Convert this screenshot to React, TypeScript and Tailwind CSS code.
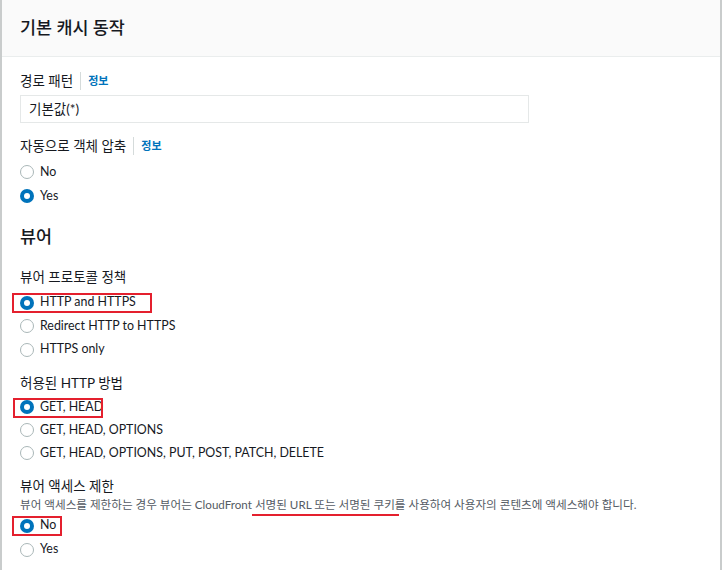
import React from "react";

const font = { fontFamily: '"Lato", "Noto Sans CJK KR", sans-serif' };

function Radio({ checked }: { checked?: boolean }) {
  return checked ? (
    <span className="inline-flex h-[14px] w-[14px] shrink-0 items-center justify-center rounded-full bg-[#0073bb]">
      <span className="h-[6px] w-[6px] rounded-full bg-white" />
    </span>
  ) : (
    <span className="h-[14px] w-[14px] shrink-0 rounded-full border-[1.5px] border-[#aab7b8] bg-white" />
  );
}

function Option({
  label,
  checked,
  box,
}: {
  label: string;
  checked?: boolean;
  box?: string;
}) {
  return (
    <div className="relative flex h-[23.5px] items-center gap-[6px] text-[12.4px] text-[#16191f]">
      <Radio checked={checked} />
      <span>{label}</span>
      {box && (
        <span
          className={`pointer-events-none absolute top-[2px] h-[20px] border-2 border-[#e4202e] ${box}`}
        />
      )}
    </div>
  );
}

function Label({ text, info }: { text: string; info?: boolean }) {
  return (
    <div className="flex h-5 items-center text-[13.5px] text-[#16191f]">
      <span>{text}</span>
      {info && (
        <>
          <span className="mx-[7px] h-[18px] w-px bg-[#d5dbdb]" />
          <span className="text-[11px] font-bold text-[#0073bb]">정보</span>
        </>
      )}
    </div>
  );
}

export default function App() {
  return (
    <div
      style={font}
      className="h-[570px] w-[722px] overflow-hidden border-r-2 border-l-2 border-[#c9cccc] bg-white"
    >
      <div className="flex h-[57px] items-center border-b border-[#eaeded] bg-[#fafafa] px-[18px]">
        <h2 className="text-[17.4px] font-medium text-[#16191f]">기본 캐시 동작</h2>
      </div>

      <div className="px-[18px] pt-[14px]">
        <Label text="경로 패턴" info />
        <div className="mt-[4px] flex h-[28px] w-[509px] items-center border border-[#e5e8e8] px-[8px] text-[13.5px] text-[#16191f]">
          기본값(*)
        </div>

        <div className="mt-[13px]">
          <Label text="자동으로 객체 압축" info />
          <div className="mt-[4px] [&>div]:h-[24px]">
            <Option label="No" />
            <Option label="Yes" checked />
          </div>
        </div>

        <h3 className="mt-[17px] text-[17.4px] font-medium leading-6 text-[#16191f]">뷰어</h3>

        <div className="mt-[18px]">
          <Label text="뷰어 프로토콜 정책" />
          <div className="mt-[4px]">
            <Option label="HTTP and HTTPS" checked box="left-[-8px] w-[140px]" />
            <Option label="Redirect HTTP to HTTPS" />
            <Option label="HTTPS only" />
          </div>
        </div>

        <div className="mt-[12px]">
          <Label text="허용된 HTTP 방법" />
          <div className="mt-[2px] [&>div]:h-[23px]">
            <Option label="GET, HEAD" checked box="left-[-7px] w-[90px]" />
            <Option label="GET, HEAD, OPTIONS" />
            <Option label="GET, HEAD, OPTIONS, PUT, POST, PATCH, DELETE" />
          </div>
        </div>

        <div className="mt-[12px]">
          <Label text="뷰어 액세스 제한" />
          <p className="mt-[1px] text-[11.6px] leading-[14px] text-[#545b64]">
            뷰어 액세스를 제한하는 경우 뷰어는 CloudFront{" "}
            <span className="relative">
              서명된 URL 또는 서명된 쿠키
              <span className="absolute right-[-4px] bottom-[-5px] left-[-3px] h-[2px] bg-[#e4202e]" />
            </span>
            를 사용하여 사용자의 콘텐츠에 액세스해야 합니다.
          </p>
          <div className="mt-[2px] [&>div]:h-[24px]">
            <Option label="No" checked box="left-[-8px] w-[50px]" />
            <Option label="Yes" />
          </div>
        </div>
      </div>
    </div>
  );
}
